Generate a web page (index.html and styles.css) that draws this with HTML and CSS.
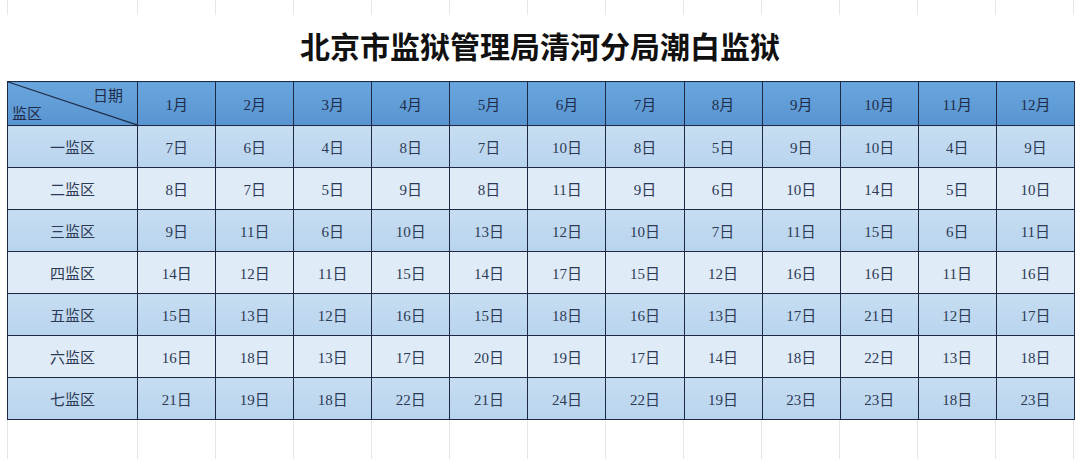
FILE: index.html
```html
<!DOCTYPE html>
<html lang="zh">
<head>
<meta charset="utf-8">
<link rel="stylesheet" href="styles.css">
</head>
<body>
<div class="page">
  <div class="grid-strip top">
    <span></span><span></span><span></span><span></span><span></span><span></span><span></span><span></span><span></span><span></span><span></span><span></span><span></span><span></span>
  </div>
  <h1 class="title">北京市监狱管理局清河分局潮白监狱</h1>
  <table class="sched">
    <colgroup>
      <col class="col-first">
      <col class="col-m"><col class="col-m"><col class="col-m"><col class="col-m"><col class="col-m"><col class="col-m">
      <col class="col-m"><col class="col-m"><col class="col-m"><col class="col-m"><col class="col-m"><col class="col-m">
    </colgroup>
    <thead>
      <tr>
        <th class="corner">
          <svg class="diag" viewBox="0 0 130 44" preserveAspectRatio="none"><line x1="0" y1="0" x2="130" y2="44" stroke="#1e2a44" stroke-width="1.2"/></svg>
          <span class="c-top">日期</span>
          <span class="c-bot">监区</span>
        </th>
        <th>1月</th><th>2月</th><th>3月</th><th>4月</th><th>5月</th><th>6月</th><th>7月</th><th>8月</th><th>9月</th><th>10月</th><th>11月</th><th>12月</th>
      </tr>
    </thead>
    <tbody>
      <tr class="odd"><td>一监区</td><td>7日</td><td>6日</td><td>4日</td><td>8日</td><td>7日</td><td>10日</td><td>8日</td><td>5日</td><td>9日</td><td>10日</td><td>4日</td><td>9日</td></tr>
      <tr class="even"><td>二监区</td><td>8日</td><td>7日</td><td>5日</td><td>9日</td><td>8日</td><td>11日</td><td>9日</td><td>6日</td><td>10日</td><td>14日</td><td>5日</td><td>10日</td></tr>
      <tr class="odd"><td>三监区</td><td>9日</td><td>11日</td><td>6日</td><td>10日</td><td>13日</td><td>12日</td><td>10日</td><td>7日</td><td>11日</td><td>15日</td><td>6日</td><td>11日</td></tr>
      <tr class="even"><td>四监区</td><td>14日</td><td>12日</td><td>11日</td><td>15日</td><td>14日</td><td>17日</td><td>15日</td><td>12日</td><td>16日</td><td>16日</td><td>11日</td><td>16日</td></tr>
      <tr class="odd"><td>五监区</td><td>15日</td><td>13日</td><td>12日</td><td>16日</td><td>15日</td><td>18日</td><td>16日</td><td>13日</td><td>17日</td><td>21日</td><td>12日</td><td>17日</td></tr>
      <tr class="even"><td>六监区</td><td>16日</td><td>18日</td><td>13日</td><td>17日</td><td>20日</td><td>19日</td><td>17日</td><td>14日</td><td>18日</td><td>22日</td><td>13日</td><td>18日</td></tr>
      <tr class="odd"><td>七监区</td><td>21日</td><td>19日</td><td>18日</td><td>22日</td><td>21日</td><td>24日</td><td>22日</td><td>19日</td><td>23日</td><td>23日</td><td>18日</td><td>23日</td></tr>
    </tbody>
  </table>
  <div class="grid-strip bottom">
    <span></span><span></span><span></span><span></span><span></span><span></span><span></span><span></span><span></span><span></span><span></span><span></span><span></span><span></span>
  </div>
</div>
</body>
</html>
```
FILE: styles.css
```css
html, body {
  margin: 0;
  padding: 0;
  background: #ffffff;
}
body {
  width: 1080px;
  height: 459px;
  overflow: hidden;
  font-family: "Liberation Serif", "Noto Sans CJK SC", serif;
  color: #2d3a55;
}
.page {
  padding-left: 7px;
}
.grid-strip {
  display: grid;
  grid-template-columns: 130px repeat(12, 78px) 1px;
}
.grid-strip span {
  border-left: 1px solid #e6e6e6;
}
.grid-strip.top {
  height: 15px;
}
.grid-strip.bottom {
  height: 40px;
}
.title {
  margin: 0;
  height: 66px;
  line-height: 60px;
  text-align: center;
  padding-right: 7px;
  font-family: "Noto Sans CJK SC", sans-serif;
  font-weight: 700;
  font-size: 30px;
  color: #111111;
  letter-spacing: 0;
}
.sched {
  border-collapse: collapse;
  table-layout: fixed;
  width: 1068px;
}
.col-first {
  width: 130px;
}
.col-m {
  width: 78px;
}
.sched th, .sched td {
  border: 1.5px solid #1e2a44;
  text-align: center;
  font-size: 15px;
  padding: 0;
  overflow: hidden;
  white-space: nowrap;
}
.sched th {
  height: 43px;
  font-weight: 400;
  color: #1f2c4a;
  background: linear-gradient(#6aa6dd, #5894d0);
}
.sched th.corner {
  position: relative;
  text-align: left;
}
.diag {
  position: absolute;
  left: 0;
  top: 0;
  width: 100%;
  height: 100%;
}
.c-top {
  position: absolute;
  right: 14px;
  top: 2px;
  font-size: 15px;
}
.c-bot {
  position: absolute;
  left: 4px;
  bottom: 2px;
  font-size: 15px;
}
.sched td {
  height: 41px;
}
.sched tr.odd td {
  background: linear-gradient(#c7ddf1, #b8d4ee);
}
.sched tr.even td {
  background: #dfebf7;
}
```
